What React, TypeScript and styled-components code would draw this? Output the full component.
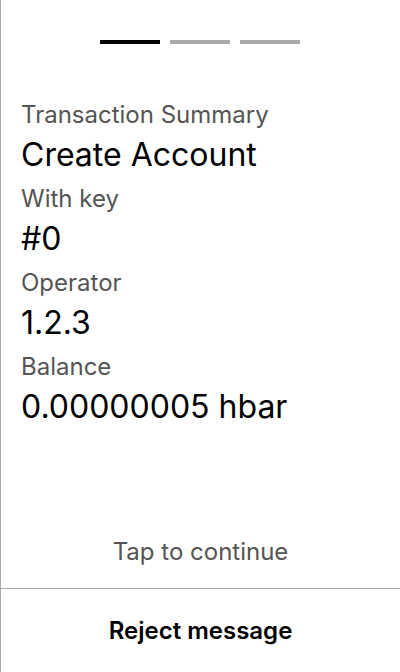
import React from "react";
import styled, { createGlobalStyle } from "styled-components";

const Global = createGlobalStyle`
  html, body { margin: 0; padding: 0; background: #fff; }
  body { font-family: Inter, "Noto Sans", sans-serif; }
  #root { height: 672px; }
`;

const Screen = styled.div`
  box-sizing: border-box;
  width: 400px;
  height: 672px;
  border-left: 1px solid #aaaaaa;
  display: flex;
  flex-direction: column;
  background: #fff;
`;

const Steps = styled.div`
  display: flex;
  justify-content: center;
  gap: 10px;
  padding-top: 40px;
  padding-right: 1px;
`;

const Step = styled.div<{ $active?: boolean }>`
  width: 60px;
  height: 4px;
  background: ${(p) => (p.$active ? "#000" : "#aaaaaa")};
`;

const Summary = styled.div`
  flex: 1;
  padding: 56px 20px 0 20px;
  display: flex;
  flex-direction: column;
`;

const Label = styled.div`
  font-size: 24px;
  line-height: 29px;
  color: #555;
  margin-bottom: 6px;
`;

const Value = styled.div`
  font-size: 32px;
  line-height: 39px;
  color: #000;
  margin-bottom: 10px;
`;

const Hint = styled.div`
  text-align: center;
  font-size: 24px;
  line-height: 29px;
  color: #555;
  padding-bottom: 22px;
`;

const Footer = styled.button`
  all: unset;
  box-sizing: border-box;
  height: 84px;
  border-top: 1px solid #aaaaaa;
  display: flex;
  align-items: center;
  justify-content: center;
  font-family: Inter, sans-serif;
  font-size: 24px;
  font-weight: 600;
  color: #000;
`;

const rows: [string, string][] = [
  ["Transaction Summary", "Create Account"],
  ["With key", "#0"],
  ["Operator", "1.2.3"],
  ["Balance", "0.00000005 hbar"],
];

export default function App() {
  return (
    <>
      <Global />
      <Screen>
        <Steps>
          <Step $active />
          <Step />
          <Step />
        </Steps>
        <Summary>
          {rows.map(([l, v]) => (
            <React.Fragment key={l}>
              <Label>{l}</Label>
              <Value>{v}</Value>
            </React.Fragment>
          ))}
        </Summary>
        <Hint>Tap to continue</Hint>
        <Footer>Reject message</Footer>
      </Screen>
    </>
  );
}
